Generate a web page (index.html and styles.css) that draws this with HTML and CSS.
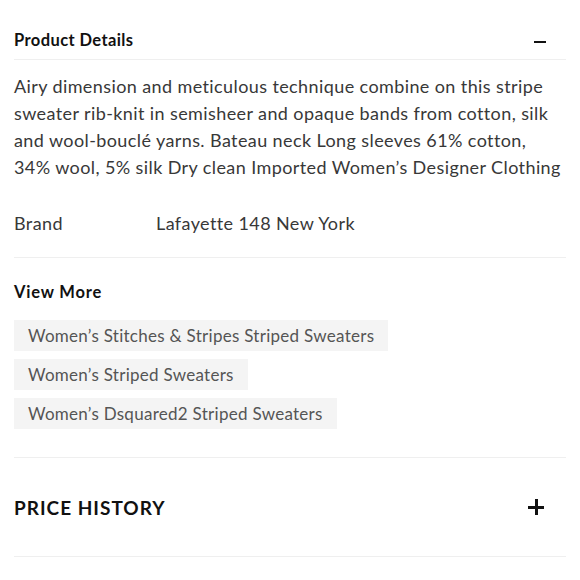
FILE: index.html
```html
<!DOCTYPE html>
<html>
<head>
<meta charset="utf-8">
<link rel="stylesheet" href="styles.css">
</head>
<body>
<div class="page">
  <section class="details">
    <div class="acc-head">
      <h2 class="acc-title">Product Details</h2>
      <span class="minus"></span>
    </div>
    <p class="desc">Airy dimension and meticulous technique combine on this stripe sweater rib-knit in semisheer and opaque bands from cotton, silk and wool-bouclé yarns. Bateau neck Long sleeves 61% cotton, 34% wool, 5% silk Dry clean Imported Women’s Designer Clothing</p>
    <div class="brand-row">
      <span class="brand-label">Brand</span>
      <span class="brand-value">Lafayette 148 New York</span>
    </div>
  </section>
  <section class="more">
    <h3 class="more-title">View More</h3>
    <div class="tags">
      <a class="tag">Women’s Stitches &amp; Stripes Striped Sweaters</a>
      <a class="tag">Women’s Striped Sweaters</a>
      <a class="tag">Women’s Dsquared2 Striped Sweaters</a>
    </div>
  </section>
  <section class="price">
    <h2 class="price-title">PRICE HISTORY</h2>
    <span class="plus"></span>
  </section>
</div>
</body>
</html>
```
FILE: styles.css
```css
* { box-sizing: border-box; }
body { margin: 0; background: #fff; font-family: "Lato", "Open Sans", sans-serif; color: #222; }
.page { padding: 0 14px; }
.details { border-bottom: 1px solid #efefef; }
.acc-head { display: flex; justify-content: space-between; align-items: center; height: 60px; padding-top: 20px; border-bottom: 1px solid #efefef; }
.acc-title { margin: 0; font-size: 16.5px; font-weight: 700; letter-spacing: 0.4px; color: #111; }
.minus { width: 12px; height: 2px; background: #111; margin-right: 20px; margin-top: 4px; }
.desc { margin: 13px 0 0; font-size: 18px; letter-spacing: 0.4px; line-height: 27px; color: #383838; }
.brand-row { display: flex; padding: 30px 0 22px; line-height: 24px; font-size: 18px; letter-spacing: 0.4px; color: #383838; }
.brand-label { width: 142px; }
.more { padding-top: 22px; border-bottom: 1px solid #efefef; padding-bottom: 28px; }
.more-title { margin: 0 0 16px; font-size: 16.5px; font-weight: 700; letter-spacing: 0.8px; color: #111; line-height: 24px; }
.tags { display: flex; flex-direction: column; align-items: flex-start; gap: 8px; }
.tag { background: #f4f4f4; color: #555; font-size: 17px; letter-spacing: 0.28px; padding: 0 14px; height: 31px; line-height: 31px; }
.price { display: flex; justify-content: space-between; align-items: center; height: 99px; border-bottom: 1px solid #efefef; }
.price-title { margin: 0; font-size: 19px; font-weight: 700; letter-spacing: 1px; color: #111; }
.plus { position: relative; width: 16px; height: 16px; margin-right: 22px; }
.plus::before, .plus::after { content: ""; position: absolute; background: #111; }
.plus::before { left: 0; right: 0; top: 7px; height: 2.5px; }
.plus::after { top: 0; bottom: 0; left: 7px; width: 2.5px; }
```
